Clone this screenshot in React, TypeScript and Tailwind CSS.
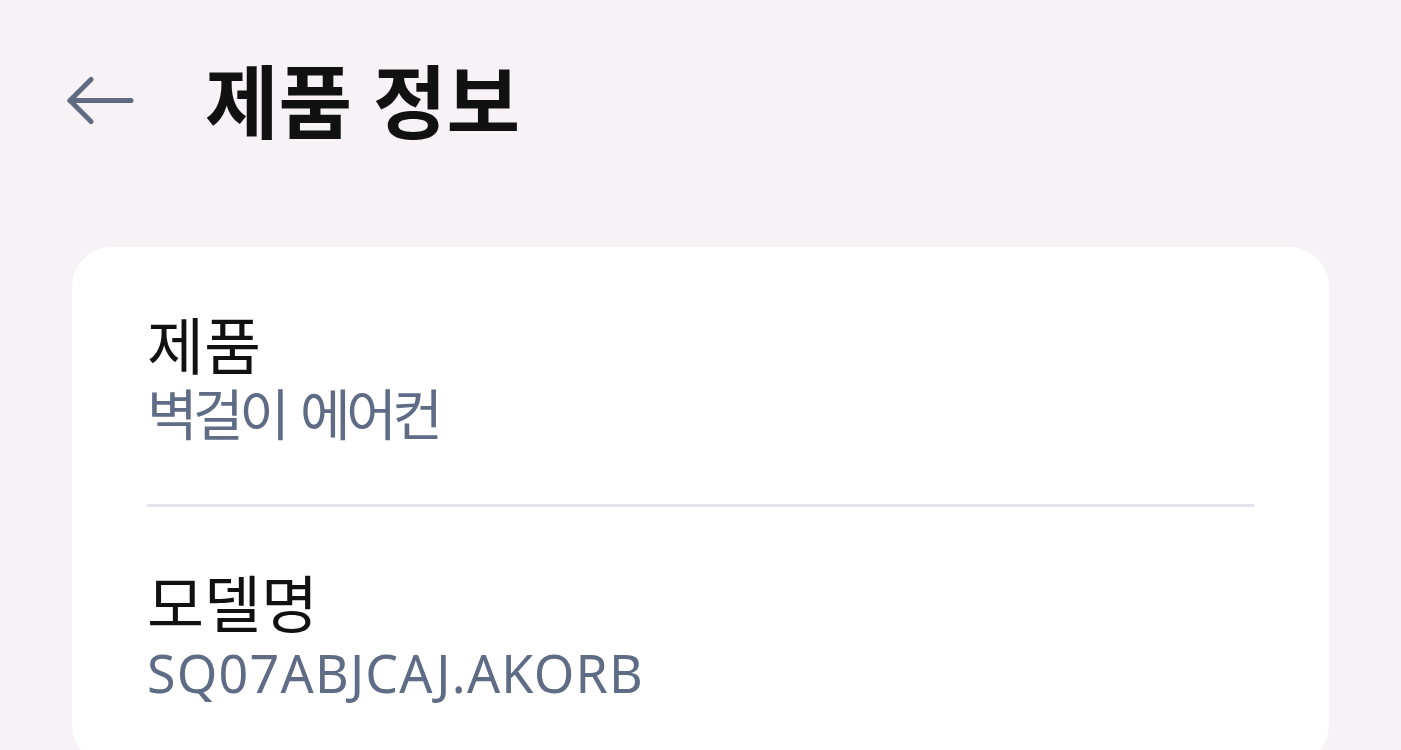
const font = { fontFamily: '"Noto Sans", "Noto Sans CJK KR", sans-serif' };

const BackArrow = () => (
  <svg width="70" height="50" viewBox="0 0 70 50" fill="none" stroke="#5f6b80" strokeWidth="5" strokeLinecap="round" strokeLinejoin="round">
    <path d="M3 24.5H64" />
    <path d="M24 3.5L3 24.5L24 45.5" />
  </svg>
);

const InfoItem = ({ label, value, valueClass }: { label: string; value: string; valueClass: string }) => {
  return (
    <div className="flex flex-col">
      <div className="text-[62px] leading-[74px] text-[#111111]">{label}</div>
      <div className={valueClass}>{value}</div>
    </div>
  );
};

export default function App() {
  return (
    <div className="min-h-[750px] w-full bg-[#f6f2f6] overflow-hidden" style={font}>
      {/* header */}
      <div className="flex items-center h-[205px] pl-[67px] pb-[4px]">
        <BackArrow />
        <h1 className="ml-[68px] text-[80px] font-bold text-[#111111]">제품 정보</h1>
      </div>

      {/* card */}
      <div className="mx-[72px] mt-[42px] bg-white rounded-[40px] px-[75px] pt-[62px] pb-[60px]">
        <InfoItem
          label="제품"
          value="벽걸이 에어컨"
          valueClass="text-[55px] leading-[62px] tracking-[-4.5px] [word-spacing:5px] text-[#5f6c85]"
        />
        <div className="h-[3px] bg-[#e3e3ee] mt-[59px] mb-[60px]" />
        <InfoItem
          label="모델명"
          value="SQ07ABJCAJ.AKORB"
          valueClass="text-[52px] leading-[64px] tracking-[1.2px] text-[#5f6c85]"
        />
      </div>
    </div>
  );
}
